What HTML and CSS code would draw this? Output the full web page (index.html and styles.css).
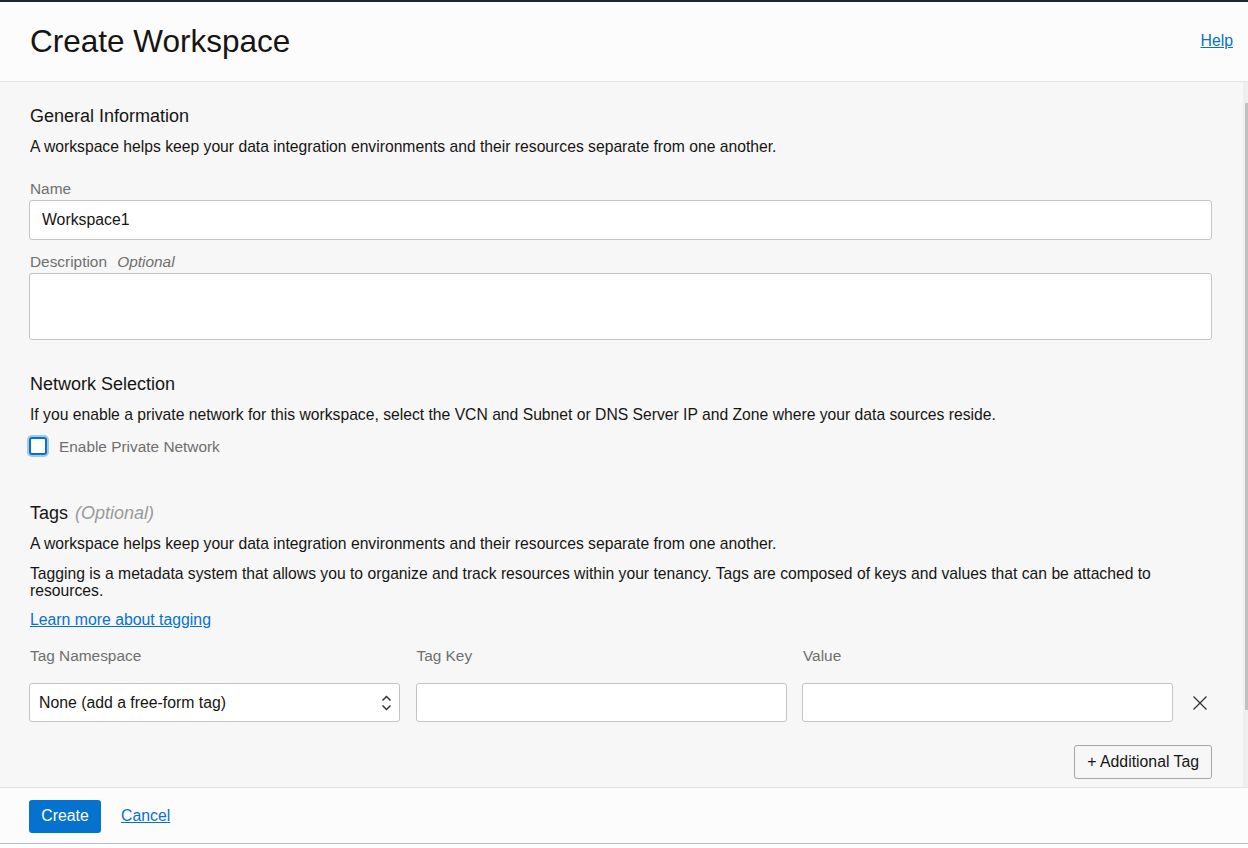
FILE: index.html
```html
<!DOCTYPE html>
<html lang="en">
<head>
<meta charset="utf-8">
<title>Create Workspace</title>
<link rel="stylesheet" href="styles.css">
</head>
<body>
<div class="topbar"></div>
<header class="header">
  <h1 class="title">Create Workspace</h1>
  <a class="link help" href="#">Help</a>
</header>
<div class="main">
  <div class="content">
    <h2 class="section-title">General Information</h2>
    <p class="text">A workspace helps keep your data integration environments and their resources separate from one another.</p>

    <label class="label label-name">Name</label>
    <div class="input">Workspace1</div>

    <label class="label label-desc">Description <em class="opt">Optional</em></label>
    <div class="input textarea"></div>

    <h2 class="section-title net-title">Network Selection</h2>
    <p class="text">If you enable a private network for this workspace, select the VCN and Subnet or DNS Server IP and Zone where your data sources reside.</p>
    <div class="check-row">
      <span class="checkbox"></span>
      <span class="check-label">Enable Private Network</span>
    </div>

    <h2 class="section-title tags-title">Tags <em class="tags-opt">(Optional)</em></h2>
    <p class="text">A workspace helps keep your data integration environments and their resources separate from one another.</p>
    <p class="text text2">Tagging is a metadata system that allows you to organize and track resources within your tenancy. Tags are composed of keys and values that can be attached to resources.</p>
    <a class="link learn" href="#">Learn more about tagging</a>

    <div class="tag-grid tag-labels">
      <span class="label">Tag Namespace</span>
      <span class="label">Tag Key</span>
      <span class="label">Value</span>
      <span></span>
    </div>
    <div class="tag-grid tag-inputs">
      <div class="input small select">
        <span>None (add a free-form tag)</span>
        <svg class="updown" width="11" height="18" viewBox="0 0 11 18"><path d="M1.5 6.5 L5.5 2.5 L9.5 6.5 M1.5 11.5 L5.5 15.5 L9.5 11.5" fill="none" stroke="#333" stroke-width="1.5"/></svg>
      </div>
      <div class="input small"></div>
      <div class="input small"></div>
      <div class="remove">
        <svg width="16" height="16" viewBox="0 0 16 16"><path d="M1.5 1.5 L14.5 14.5 M14.5 1.5 L1.5 14.5" stroke="#333" stroke-width="1.3" fill="none"/></svg>
      </div>
    </div>
    <div class="add-row">
      <button class="btn-secondary">+ Additional Tag</button>
    </div>
  </div>
  <div class="scrollbar"><div class="thumb"></div></div>
</div>
<footer class="footer">
  <button class="btn-primary">Create</button>
  <a class="link cancel" href="#">Cancel</a>
</footer>
</body>
</html>
```
FILE: styles.css
```css
* { box-sizing: border-box; }
html, body { margin: 0; padding: 0; background: #ffffff; }
body {
  font-family: "Liberation Sans", Arial, sans-serif;
  color: #161513;
  width: 1248px;
  height: 848px;
  overflow: hidden;
}
.topbar { height: 2px; background: #1f2630; }
.header {
  height: 80px;
  background: #fcfcfc;
  border-bottom: 1px solid #e4e4e4;
  display: flex;
  align-items: center;
  justify-content: space-between;
  padding: 0 15px 0 30px;
}
.title {
  margin: 0;
  font-size: 31.5px;
  font-weight: normal;
  line-height: 40px;
  color: #161513;
  padding-bottom: 2px;
}
.link { color: #0572ce; text-decoration: underline; font-size: 15.8px; }
.help { padding-bottom: 1px; }
.main {
  height: 705px;
  background: #f7f7f7;
  display: flex;
}
.content {
  flex: 1;
  padding: 23px 31px 0 29px;
}
.scrollbar {
  width: 5px;
  background: #efefef;
  padding-top: 21px;
  display: flex;
  justify-content: flex-end;
}
.thumb { width: 3px; height: 607px; background: #c1c1c1; }
.section-title {
  margin: 0 0 0 1px;
  font-size: 18px;
  font-weight: normal;
  line-height: 22px;
}
.text {
  margin: 10px 0 0 1px;
  font-size: 15.7px;
  line-height: 20px;
}
.label {
  display: block;
  font-size: 15.4px;
  line-height: 18px;
  color: #6f6f6f;
  margin-left: 1px;
}
.label-name { margin-top: 23px; }
.label-desc { margin-top: 13px; }
.opt { font-style: italic; margin-left: 6px; color: #6f6f6f; }
.input {
  margin-top: 2px;
  height: 40px;
  background: #fff;
  border: 1px solid #c4c4c4;
  border-radius: 3px;
  font-size: 15.8px;
  line-height: 38px;
  padding: 0 12px;
}
.textarea { height: 67px; }
.net-title { margin-top: 33px; }
.check-row {
  display: flex;
  align-items: center;
  margin-top: 12px;
  height: 18px;
}
.checkbox {
  width: 18px;
  height: 18px;
  background: #fff;
  border: 2px solid #0572ce;
  border-radius: 3px;
  box-shadow: 0 0 0 2px rgba(5, 114, 206, 0.35);
}
.check-label {
  margin-left: 12px;
  font-size: 15.4px;
  color: #6f6f6f;
  padding-top: 2px;
}
.tags-title { margin-top: 47px; }
.tags-opt { color: #9a9a9a; font-style: italic; margin-left: 2px; }
.tags-title + .text { margin-top: 10px; }
.text2 { line-height: 17px; margin-top: 11px; }
.learn { display: block; margin: 12px 0 0 1px; line-height: 18px; }
.tag-grid {
  display: grid;
  grid-template-columns: 1fr 1fr 1fr 23.5px;
  column-gap: 15.5px;
}
.tag-labels { margin-top: 18px; }
.tag-inputs { margin-top: 18px; align-items: center; }
.input.small { margin-top: 0; height: 39px; line-height: 37px; }
.select {
  display: flex;
  align-items: center;
  justify-content: space-between;
  padding: 0 7px 0 9px;
}
.updown { display: block; }
.remove { display: flex; justify-content: center; align-items: center; height: 39px; }
.remove svg { display: block; }
.add-row {
  display: flex;
  justify-content: flex-end;
  margin-top: 23px;
}
.btn-secondary {
  height: 34px;
  padding: 0 12px;
  font-family: inherit;
  font-size: 15.8px;
  color: #161513;
  background: #f7f7f7;
  border: 1px solid #a6a6a6;
  border-radius: 3px;
}
.footer {
  height: 57px;
  background: #fcfcfc;
  border-top: 1px solid #e2e2e2;
  border-bottom: 1px solid #b9bdc6;
  display: flex;
  align-items: center;
  padding: 1px 0 0 29px;
}
.btn-primary {
  width: 72px;
  height: 33px;
  background: #0572ce;
  color: #fff;
  border: none;
  border-radius: 3px;
  font-family: inherit;
  font-size: 15.8px;
  padding: 0;
}
.cancel { margin-left: 20px; }
```
